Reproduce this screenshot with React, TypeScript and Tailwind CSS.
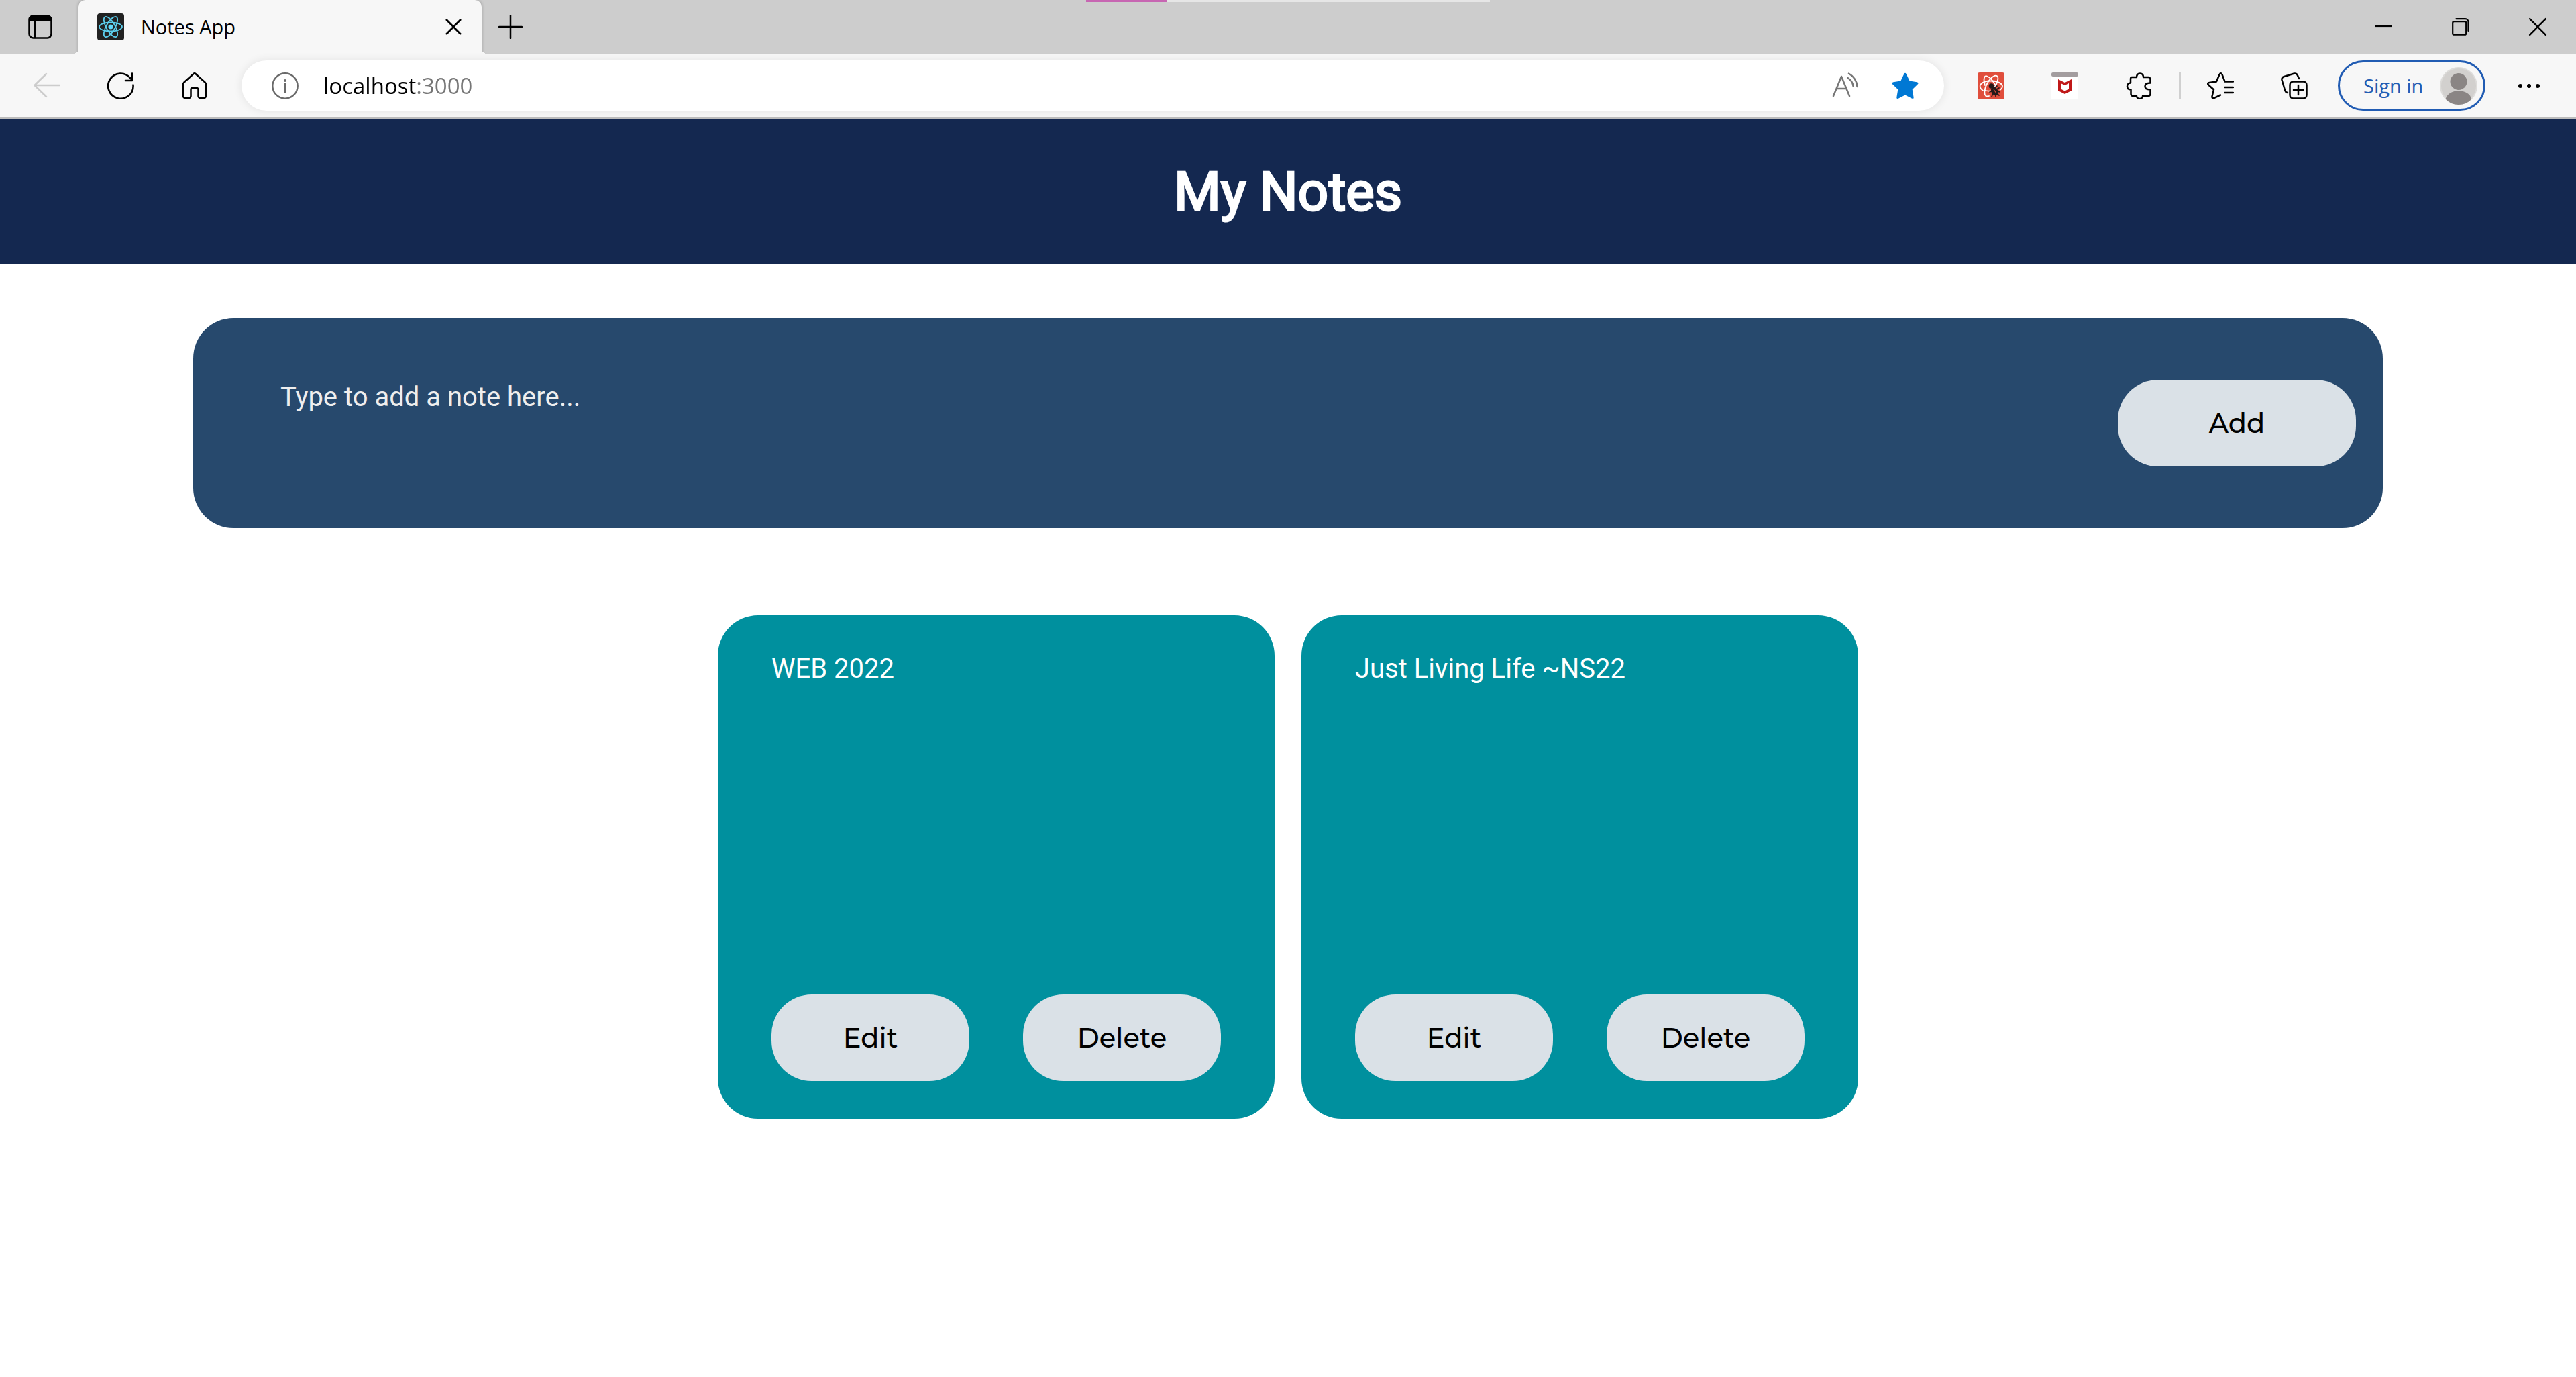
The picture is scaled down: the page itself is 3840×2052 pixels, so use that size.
import React from "react";

type IconProps = { className?: string; weight?: number };

const line = {
  fill: "none",
  stroke: "currentColor",
  strokeLinecap: "round" as const,
  strokeLinejoin: "round" as const,
};

const SidebarIcon = () => (
  <svg className="h-9 w-9" viewBox="0 0 36 36">
    <rect x="1.5" y="1.5" width="33" height="33" rx="6" {...line} strokeWidth="2.5" />
    <path d="M1.5 10V7a6 6 0 0 1 6-6h21a6 6 0 0 1 6 6v3z" fill="currentColor" />
    <path d="M10 10v24" {...line} strokeWidth="2.5" />
  </svg>
);

const ReactIcon = () => (
  <svg className="h-10 w-10 shrink-0" viewBox="0 0 40 40">
    <rect width="40" height="40" rx="4" fill="#222" />
    <g fill="none" stroke="#5ccfee" strokeWidth="1.8">
      <ellipse cx="20" cy="20" rx="17" ry="6.5" />
      <ellipse cx="20" cy="20" rx="17" ry="6.5" transform="rotate(60 20 20)" />
      <ellipse cx="20" cy="20" rx="17" ry="6.5" transform="rotate(120 20 20)" />
    </g>
    <circle cx="20" cy="20" r="3.5" fill="#61dafb" />
  </svg>
);

const CrossIcon = ({ className, weight = 2.3 }: IconProps) => (
  <svg className={className} viewBox="0 0 26 26">
    <path d="M2 2l22 22M24 2L2 24" {...line} strokeWidth={weight} />
  </svg>
);

const PlusIcon = () => (
  <svg className="h-9 w-9" viewBox="0 0 36 36">
    <path d="M18 1v34M1 18h34" {...line} strokeWidth="2.5" />
  </svg>
);

const BackIcon = () => (
  <svg className="h-10 w-10" viewBox="0 0 40 40">
    <path d="M38.500 19H1M19 2L1.500 19 19 36" {...line} strokeWidth="2.5" />
  </svg>
);

const ReloadIcon = () => (
  <svg className="h-10 w-10" viewBox="0 0 40 40">
    <path d="M38.500 18.500A18.700 18.700 0 1 1 34.500 8.500L37 11.500M37 1.500v10.500H27" {...line} strokeWidth="2.6" />
  </svg>
);

const HomeIcon = () => (
  <svg className="h-10 w-10" viewBox="0 0 40 40">
    <path
      d="M18.500 2a2.200 2.200 0 0 1 3 0L35.500 14.500Q37 16 37 18V35a3 3 0 0 1-3 3H28.500a3 3 0 0 1-3-3V25.500a2.500 2.500 0 0 0-2.500-2.500H17a2.500 2.500 0 0 0-2.500 2.500V35a3 3 0 0 1-3 3H6a3 3 0 0 1-3-3V18Q3 16 4.500 14.500z"
      {...line}
      strokeWidth="2.5"
    />
  </svg>
);

const InfoIcon = () => (
  <svg className="h-10 w-10 shrink-0 text-[#6a6a6a]" viewBox="0 0 40 40">
    <circle cx="20" cy="20" r="18.7" {...line} strokeWidth="2.4" />
    <path d="M20 17v12" {...line} strokeWidth="2.6" />
    <circle cx="20" cy="12" r="1.9" fill="currentColor" />
  </svg>
);

const ReadAloudIcon = () => (
  <svg className="h-10 w-10" viewBox="0 0 40 40">
    <path d="M3 35L15 6l12 29M7.500 24h15M24.500 8q7 4.500 8 12M26 1.500q11.500 6.500 12.500 19.500" {...line} strokeWidth="2.5" />
  </svg>
);

const starPath =
  "M18.300 2.300Q20-.6 21.700 2.300L26.600 12.600 37.600 14.200Q41 15 38.700 17.500L30.700 25.300 32.600 36.700Q33 40 29.800 38.600L20 33.500 10.200 38.600Q7 40 7.400 36.700L9.300 25.300 1.300 17.500Q-1 15 2.400 14.200L13.400 12.600Z";

const StarIcon = () => (
  <svg className="h-10 w-10" viewBox="0 0 40 40">
    <path d={starPath} fill="#0078d4" />
  </svg>
);

const ReactBugIcon = () => (
  <svg className="h-10 w-10" viewBox="0 0 40 40">
    <rect width="40" height="40" rx="3" fill="#e04e3c" />
    <g fill="none" stroke="#fff" strokeWidth="1.8" strokeLinecap="round">
      <path d="M8 27C-2 20 6 12.500 20 12.500S42 20 33.500 26" />
      <path d="M17 35C8 38 9 26 14.500 16S28 2 30 6.500 26 22 22 27" />
      <path d="M11 19C8 9 10 4 14 5.500S23 12 28 21" />
      <path d="M10 26Q14 28 19 27.500" />
    </g>
    <g fill="#261a19" stroke="#261a19" strokeWidth="1.7" strokeLinecap="round">
      <circle cx="20.5" cy="20" r="3" />
      <ellipse cx="25.5" cy="28" rx="4" ry="6" transform="rotate(-35 25.5 28)" />
      <path d="M21 28l-3 1M23 31l-2 5M27 33l0 3M25 23l4-3M28 25l4-2M30 28l3 1M30 32l2 2" fill="none" />
    </g>
    <path d="M24 25l4 6" stroke="#e04e3c" strokeWidth="1.2" />
  </svg>
);

const ShieldIcon = () => (
  <svg className="h-10 w-10" viewBox="0 0 40 40">
    <rect width="40" height="40" fill="#fff" />
    <rect width="40" height="6" rx="2" fill="#a39d9f" />
    <path d="M10 10l10 5 10-5v17l-10 5-10-5z" fill="#c01818" />
    <path d="M14 16l6 3 6-3v8.500l-6 3-6-3z" fill="#fff" />
  </svg>
);

const PuzzleIcon = () => (
  <svg className="h-10 w-10" viewBox="0 0 40 40">
    <path
      d="M10 7H17C17 3.500 19 1.500 22 1.500S27 3.500 27 7H34.500a3 3 0 0 1 3 3V15.500C33 15.500 29.500 17 29.500 20.500S33 25.500 37.500 25.500V32a3 3 0 0 1-3 3H26C26 37.500 24 39 21.500 39S17 37.500 17 35H11.500a3 3 0 0 1-3-3V25.500C5 25.500 3 23.500 3 20.500S5 15.500 8 15.500V9.500Q8 7 10 7z"
      {...line}
      strokeWidth="2.5"
    />
  </svg>
);

const FavoritesIcon = () => (
  <svg className="h-10 w-10" viewBox="0 0 40 40">
    <path
      d="M20 33.500L10.500 38Q7 39 7.500 35.500L10 25.500 1.700 18Q0 15.500 3.500 15L14 13.500 18.500 3Q20.500-.5 22.500 3L26.500 13.500H39M26.500 22H39M26.500 30H39"
      {...line}
      strokeWidth="2.5"
    />
  </svg>
);

const CollectionsIcon = () => (
  <svg className="h-10 w-10" viewBox="0 0 40 40">
    <rect x="13.5" y="13.5" width="25" height="25" rx="5" {...line} strokeWidth="2.5" />
    <path d="M26 19v14M19 26h14M10 30Q7 30 6 26L1.500 11Q1 7 5 6L20 1.500Q24 1 25 4.500L27 9" {...line} strokeWidth="2.5" />
  </svg>
);

const AvatarIcon = () => (
  <svg className="h-14 w-14 shrink-0" viewBox="0 0 56 56">
    <circle cx="28" cy="28" r="28" fill="#dddcda" />
    <circle cx="28" cy="28" r="26" fill="#d2d0ce" />
    <circle cx="28" cy="21.5" r="12.5" fill="#8a8584" />
    <path d="M8.500 47.500C13 31 43 31 47.500 47.500Q40 56 28 56T8.500 47.500z" fill="#8a8584" />
  </svg>
);

const MoreIcon = () => (
  <svg className="h-10 w-10" viewBox="0 0 40 40" fill="currentColor">
    <circle cx="7" cy="20" r="3" />
    <circle cx="20" cy="20" r="3" />
    <circle cx="33" cy="20" r="3" />
  </svg>
);

const MinimizeIcon = () => (
  <svg className="h-[26px] w-[26px]" viewBox="0 0 26 26">
    <path d="M0 12h26" stroke="currentColor" strokeWidth="2.2" />
  </svg>
);

const RestoreIcon = () => (
  <svg className="h-[26px] w-[26px]" viewBox="0 0 26 26">
    <rect x="1.2" y="5.2" width="20" height="19.5" rx="2" {...line} strokeWidth="2.2" />
    <path d="M6.500 1.200H20a4.500 4.500 0 0 1 4.500 4.500V19" {...line} strokeWidth="2.2" />
  </svg>
);

function IconButton({ label, className = "", children }: { label: string; className?: string; children: React.ReactNode }) {
  return (
    <button type="button" aria-label={label} className={`flex shrink-0 items-center justify-center ${className}`}>
      {children}
    </button>
  );
}

function TabStrip() {
  return (
    <div className="relative flex h-20 bg-[#cdcdcd]">
      <div className="absolute left-1/2 top-0 flex h-[3px] w-[602px] -translate-x-1/2 bg-[#e6e6e6]">
        <div className="w-1/5 bg-[#c766b2]" />
      </div>
      <IconButton label="Tab actions" className="w-[117px] pl-[3px]">
        <SidebarIcon />
      </IconButton>
      <div className="relative flex w-[601px] items-center rounded-t-[10px] bg-[#f7f7f7] px-7 shadow-[0_0_5px_rgba(0,0,0,0.3)]">
        <span className="absolute -left-2 bottom-0 h-2 w-2 bg-[radial-gradient(circle_at_0_0,transparent_8px,#f7f7f7_8px)]" />
        <span className="absolute -right-2 bottom-0 h-2 w-2 bg-[radial-gradient(circle_at_100%_0,transparent_8px,#f7f7f7_8px)]" />
        <ReactIcon />
        <span className="ml-[25px] grow text-[29px]">Notes App</span>
        <IconButton label="Close tab" className="w-7">
          <CrossIcon className="h-6 w-6" weight={3} />
        </IconButton>
      </div>
      <IconButton label="New tab" className="w-[86px]">
        <PlusIcon />
      </IconButton>
      <div className="ml-auto flex">
        <IconButton label="Minimize" className="w-[115px]">
          <MinimizeIcon />
        </IconButton>
        <IconButton label="Restore" className="w-[115px]">
          <RestoreIcon />
        </IconButton>
        <IconButton label="Close window" className="w-[115px]">
          <CrossIcon className="h-7 w-7" />
        </IconButton>
      </div>
    </div>
  );
}

function Toolbar() {
  return (
    <div className="relative flex h-[98px] items-center border-b-[3px] border-[#bcbcbc] bg-[#f7f7f7] px-[15px]">
      <IconButton label="Back" className="h-20 w-[110px] text-[#cccccc]">
        <BackIcon />
      </IconButton>
      <IconButton label="Refresh" className="h-20 w-[110px]">
        <ReloadIcon />
      </IconButton>
      <IconButton label="Home" className="h-20 w-[110px]">
        <HomeIcon />
      </IconButton>
      <div className="ml-[15px] flex h-[75px] grow items-center rounded-full bg-white pl-[45px] pr-[38px] shadow-[0_0_14px_rgba(0,0,0,0.09)]">
        <InfoIcon />
        <input
          aria-label="Address"
          defaultValue="localhost:3000"
          className="ml-[37px] min-w-0 grow bg-[linear-gradient(to_right,#000_138px,#767676_138px)] bg-clip-text text-[33px] text-transparent outline-none"
        />
        <IconButton label="Read aloud" className="mr-[50px] text-[#767676]">
          <ReadAloudIcon />
        </IconButton>
        <IconButton label="Favorite this page">
          <StarIcon />
        </IconButton>
      </div>
      <IconButton label="React Developer Tools" className="ml-[15px] h-20 w-[110px]">
        <ReactBugIcon />
      </IconButton>
      <IconButton label="McAfee WebAdvisor" className="h-20 w-[110px]">
        <ShieldIcon />
      </IconButton>
      <IconButton label="Extensions" className="h-20 w-[110px]">
        <PuzzleIcon />
      </IconButton>
      <div className="ml-[5px] h-10 w-[3px] bg-[#d0d0d0]" />
      <IconButton label="Favorites" className="ml-1 h-20 w-[110px]">
        <FavoritesIcon />
      </IconButton>
      <IconButton label="Collections" className="h-20 w-[110px]">
        <CollectionsIcon />
      </IconButton>
      <button
        type="button"
        className="ml-[10px] flex h-[75px] w-[220px] shrink-0 items-center justify-between rounded-full border-[3px] border-[#215cb3] pl-[35px] pr-[9px] text-[29px] text-[#215cb3]"
      >
        Sign in
        <AvatarIcon />
      </button>
      <IconButton label="Settings and more" className="ml-[10px] h-20 w-[110px]">
        <MoreIcon />
      </IconButton>
    </div>
  );
}

function PillButton({ className, children }: { className: string; children: React.ReactNode }) {
  return (
    <button
      type="button"
      className={`h-[129px] rounded-[60px] bg-[#dae1e7] font-[Montserrat,Inter,sans-serif] text-[40px] font-medium ${className}`}
    >
      {children}
    </button>
  );
}

function NoteCard({ text }: { text: string }) {
  return (
    <li className="flex h-[750px] w-[830px] flex-col rounded-[60px] bg-[#00909e] px-20 pb-14 pt-14">
      <p className="text-[40px] leading-[48px] text-white">{text}</p>
      <div className="mt-auto flex gap-20">
        <PillButton className="grow basis-0">Edit</PillButton>
        <PillButton className="grow basis-0">Delete</PillButton>
      </div>
    </li>
  );
}

const notes = ["WEB 2022", "Just Living Life ~NS22"];

export default function App() {
  return (
    <div className="min-h-screen bg-white font-[Roboto,sans-serif] text-black">
      <div className="font-['Segoe_UI','Open_Sans',sans-serif]">
        <TabStrip />
        <Toolbar />
      </div>
      <header className="flex h-[216px] items-center justify-center bg-[#142850]">
        <h1 className="text-[80px] font-normal leading-[96px] text-white [-webkit-text-stroke:3px_#fff]">My Notes</h1>
      </header>
      <main>
        <form className="mx-[7.5%] mt-20 flex h-[313px] items-center rounded-[60px] bg-[#27496d] pr-10">
          <textarea
            aria-label="New note"
            placeholder="Type to add a note here..."
            className="h-full grow resize-none pl-[130px] pt-[94px] text-[40px] leading-[48px] text-[#eeeeee] outline-none placeholder:text-[#eeeeee]"
          />
          <PillButton className="w-[355px]">Add</PillButton>
        </form>
        <ul className="mt-[130px] flex flex-wrap justify-center gap-10">
          {notes.map((note) => (
            <NoteCard key={note} text={note} />
          ))}
        </ul>
      </main>
    </div>
  );
}
